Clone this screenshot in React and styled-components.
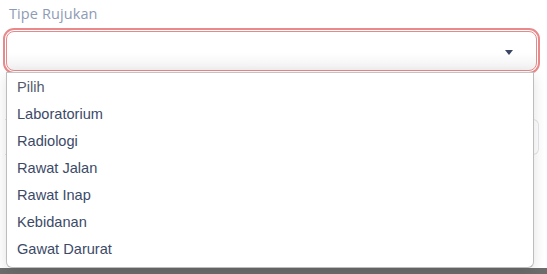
import React from "react";
import styled, { createGlobalStyle } from "styled-components";

const Global = createGlobalStyle`
  html, body { margin: 0; padding: 0; background: #6d6d6d; }
  body { width: 547px; height: 274px; overflow: hidden; }
`;

const Page = styled.div`
  height: 268px;
  background: #ffffff;
  padding: 4px 5px 0 5px;
  box-sizing: border-box;
  display: flex;
  flex-direction: column;
`;

const Field = styled.div`
  position: relative;
  display: flex;
  flex-direction: column;
`;

const Label = styled.label`
  font-family: "Open Sans", "Noto Sans", sans-serif;
  font-size: 14.5px;
  color: #8e9bb4;
  padding-left: 4px;
  line-height: 20px;
  margin-bottom: 7px;
  letter-spacing: 0.1px;
`;

const SelectBox = styled.div`
  height: 38px;
  margin: 0 5px 0 1px;
  border: 1px solid #e8888a;
  border-radius: 8px;
  outline: 2px solid #e68a8c;
  outline-offset: 1px;
  background: linear-gradient(to bottom, #ffffff 55%, #f1f1f1 100%);
  display: flex;
  align-items: center;
  justify-content: flex-end;
  padding-right: 23px;
`;

const Caret = styled.span`
  width: 0;
  height: 0;
  border-left: 4.5px solid transparent;
  border-right: 4.5px solid transparent;
  border-top: 5px solid #3a4663;
  margin-top: 2px;
`;

const Menu = styled.ul`
  position: absolute;
  top: 68px;
  left: 1px;
  width: 528px;
  margin: 0;
  padding: 1px 0 4px 0;
  list-style: none;
  background: #ffffff;
  border: 1px solid #bdbdbd;
  border-top-color: #c4c4c4;
  border-radius: 0 0 6px 6px;
  box-shadow: 0 4px 14px rgba(0, 0, 0, 0.12);
  box-sizing: border-box;
  z-index: 2;
`;

const Item = styled.li`
  font-family: "Liberation Sans", Arial, sans-serif;
  font-size: 14.6px;
  line-height: 27px;
  padding-left: 10px;
  color: ${(p) => (p.$placeholder ? "#545b6b" : "#3c4a68")};
`;

const Behind = styled.div`
  margin-top: 48px;
  margin-right: 3px;
  height: 34px;
  border: 1px solid #e3e5ea;
  border-left: none;
  border-radius: 0 6px 6px 0;
`;

const options = [
  "Laboratorium",
  "Radiologi",
  "Rawat Jalan",
  "Rawat Inap",
  "Kebidanan",
  "Gawat Darurat",
];

export default function App() {
  return (
    <>
      <Global />
      <Page>
        <Field>
          <Label>Tipe Rujukan</Label>
          <SelectBox>
            <Caret />
          </SelectBox>
          <Menu>
            <Item $placeholder>Pilih</Item>
            {options.map((o) => (
              <Item key={o}>{o}</Item>
            ))}
          </Menu>
        </Field>
        <Behind />
      </Page>
    </>
  );
}
